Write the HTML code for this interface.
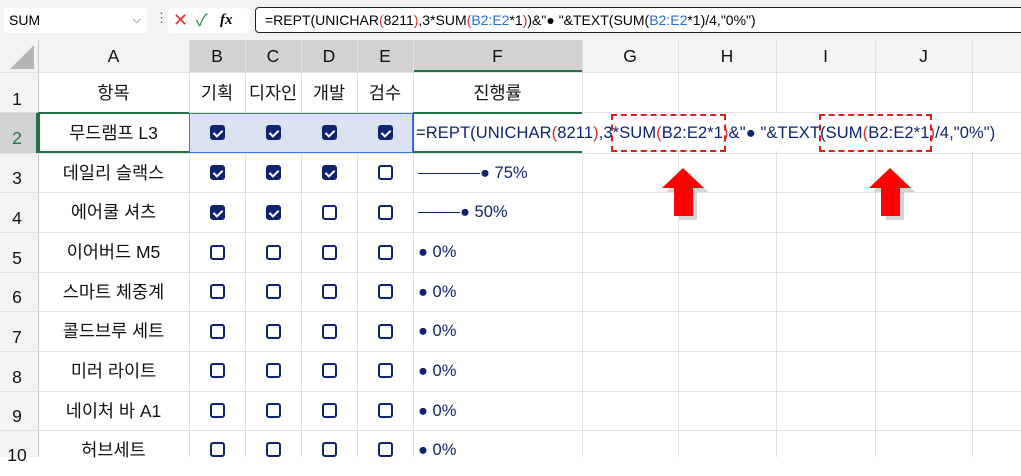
<!DOCTYPE html><html><head><meta charset="utf-8"><style>
body{margin:0;width:1021px;height:457px;overflow:hidden;background:#fff;font-family:"Liberation Sans","Noto Sans CJK KR",sans-serif;position:relative}
.a{position:absolute}
.top{left:0;top:0;width:1021px;height:40px;background:#f3f3f3}
.hdr{background:#f3f3f3;color:#222;font-size:16px;text-align:center}
.vl{position:absolute;top:40px;width:1px;height:417px;background:#e1e1e1}
.hl{position:absolute;left:0;width:1021px;height:1px;background:#e1e1e1}
.cell{position:absolute;font-size:17.5px;color:#111;text-align:center;line-height:42px}
.cb{position:absolute;width:11px;height:11px;border:2px solid #0f2370;border-radius:3px;box-sizing:content-box}
.cb.on{background:#0f2370}
.cb.on:after{content:"";position:absolute;left:3px;top:1px;width:4px;height:7px;border:solid #fff;border-width:0 2px 2px 0;transform:rotate(45deg)}
.f{position:absolute;left:418px;font-size:16.5px;color:#0f2370;line-height:40px;white-space:nowrap}
.r{color:#d9302a}.b{color:#2a6fd0}
</style></head><body>
<div class="a top"></div>
<div class="a" style="left:4px;top:8px;width:143px;height:25px;background:#fff;border-radius:4px;font-size:14px;line-height:25px;padding-left:5px;box-sizing:border-box">SUM<span style="position:absolute;right:6px;font-size:11px;color:#444">⌵</span></div>
<div class="a" style="left:155px;top:10px;font-size:13px;color:#666">⋮</div>
<div class="a" style="left:168px;top:8px;width:81px;height:25px;background:#fff;border-radius:4px"></div>
<div class="a" style="left:173px;top:8px;font-size:18px;color:#d33;line-height:25px">✕</div>
<div class="a" style="left:196px;top:8px;font-size:17px;color:#2a8a3a;line-height:25px">✓</div>
<div class="a" style="left:220px;top:8px;font-size:15px;font-style:italic;font-family:'Liberation Serif',serif;line-height:25px"><b>fx</b></div>
<div class="a" style="left:255px;top:7px;width:780px;height:26px;border:1.5px solid #222;border-radius:4px;background:#fff;font-size:14px;line-height:25px;padding-left:9px;box-sizing:border-box">=REPT(UNICHAR<span class="r">(</span>8211<span class="r">)</span>,3*SUM<span class="r">(</span><span class="b">B2:E2</span>*1<span class="r">)</span>)&amp;"● "&amp;TEXT(SUM(<span class="b">B2:E2</span>*1)/4,"0%")</div>
<!-- headers -->
<div class="a hdr" style="left:0;top:40px;width:1021px;height:32px"></div>
<div class="a hdr" style="left:0;top:72px;width:38px;height:385px"></div>
<div class="a" style="left:0;top:112px;width:38px;height:41px;background:#d2d2d2"></div>
<div class="a" style="left:189px;top:40px;width:224px;height:32px;background:#d2d2d2"></div>
<div class="a" style="left:413px;top:40px;width:169px;height:32px;background:#d2d2d2;border-bottom:2px solid #217346;box-sizing:border-box"></div>
<div class="a" style="left:36px;top:112px;width:2px;height:41px;background:#217346"></div>
<div class="a" style="left:10px;top:45px;width:0;height:0;border-left:24px solid transparent;border-bottom:24px solid #b5b5b5"></div>
<div class="vl" style="left:38px;background:#c8c8c8"></div>
<div class="vl" style="left:189px"></div><div class="vl" style="left:245px"></div><div class="vl" style="left:301px"></div><div class="vl" style="left:357px"></div><div class="vl" style="left:413px"></div><div class="vl" style="left:582px"></div><div class="vl" style="left:678px"></div><div class="vl" style="left:776px"></div><div class="vl" style="left:875px"></div><div class="vl" style="left:972px"></div>
<div class="hl" style="top:72px"></div><div class="hl" style="top:112px"></div><div class="hl" style="top:153px"></div><div class="hl" style="top:192px"></div><div class="hl" style="top:232px"></div><div class="hl" style="top:272px"></div><div class="hl" style="top:311px"></div><div class="hl" style="top:351px"></div><div class="hl" style="top:391px"></div><div class="hl" style="top:430px"></div>
<div class="cell" style="left:38px;top:40px;width:151px;line-height:32px">A</div>
<div class="cell" style="left:189px;top:40px;width:56px;line-height:32px">B</div>
<div class="cell" style="left:245px;top:40px;width:56px;line-height:32px">C</div>
<div class="cell" style="left:301px;top:40px;width:56px;line-height:32px">D</div>
<div class="cell" style="left:357px;top:40px;width:56px;line-height:32px">E</div>
<div class="cell" style="left:413px;top:40px;width:169px;line-height:32px">F</div>
<div class="cell" style="left:582px;top:40px;width:96px;line-height:32px">G</div>
<div class="cell" style="left:678px;top:40px;width:98px;line-height:32px">H</div>
<div class="cell" style="left:776px;top:40px;width:99px;line-height:32px">I</div>
<div class="cell" style="left:875px;top:40px;width:97px;line-height:32px">J</div>
<!-- row numbers -->
<div class="cell" style="left:0;top:78px;width:34px">1</div>
<div class="cell" style="left:0;top:117px;width:34px;color:#217346">2</div>
<div class="cell" style="left:0;top:157px;width:34px">3</div>
<div class="cell" style="left:0;top:197px;width:34px">4</div>
<div class="cell" style="left:0;top:237px;width:34px">5</div>
<div class="cell" style="left:0;top:276px;width:34px">6</div>
<div class="cell" style="left:0;top:316px;width:34px">7</div>
<div class="cell" style="left:0;top:356px;width:34px">8</div>
<div class="cell" style="left:0;top:395px;width:34px">9</div>
<div class="cell" style="left:0;top:434px;width:34px">10</div>
<!-- row1 -->
<div class="cell" style="left:38px;top:72px;width:151px">항목</div>
<div class="cell" style="left:189px;top:72px;width:56px">기획</div>
<div class="cell" style="left:245px;top:72px;width:56px">디자인</div>
<div class="cell" style="left:301px;top:72px;width:56px">개발</div>
<div class="cell" style="left:357px;top:72px;width:56px">검수</div>
<div class="cell" style="left:413px;top:72px;width:169px">진행률</div>
<!-- selection -->
<div class="a" style="left:189px;top:113px;width:224px;height:40px;background:#dbe3f3;border:1.5px solid #3b78d8;box-sizing:border-box"></div>
<div class="a" style="left:38px;top:112px;width:151px;height:41px;border:2px solid #217346;border-right:none;box-sizing:border-box"></div>
<div class="a" style="left:413px;top:112px;width:169px;height:41px;border-top:2px solid #217346;border-bottom:2px solid #217346;border-left:2px solid #217346;box-sizing:border-box"></div>
<div class="cell" style="left:38px;top:112px;width:151px">무드램프 L3</div>
<div class="cell" style="left:38px;top:152px;width:151px">데일리 슬랙스</div>
<div class="cell" style="left:38px;top:191px;width:151px">에어쿨 셔츠</div>
<div class="cell" style="left:38px;top:231px;width:151px">이어버드 M5</div>
<div class="cell" style="left:38px;top:271px;width:151px">스마트 체중계</div>
<div class="cell" style="left:38px;top:310px;width:151px">콜드브루 세트</div>
<div class="cell" style="left:38px;top:350px;width:151px">미러 라이트</div>
<div class="cell" style="left:38px;top:390px;width:151px">네이처 바 A1</div>
<div class="cell" style="left:38px;top:429px;width:151px">허브세트</div>
<!-- checkboxes -->
<div class="cb on" style="left:210px;top:125px"></div><div class="cb on" style="left:266px;top:125px"></div><div class="cb on" style="left:322px;top:125px"></div><div class="cb on" style="left:378px;top:125px"></div>
<div class="cb on" style="left:210px;top:165px"></div><div class="cb on" style="left:266px;top:165px"></div><div class="cb on" style="left:322px;top:165px"></div><div class="cb" style="left:378px;top:165px"></div>
<div class="cb on" style="left:210px;top:205px"></div><div class="cb on" style="left:266px;top:205px"></div><div class="cb" style="left:322px;top:205px"></div><div class="cb" style="left:378px;top:205px"></div>
<div class="cb" style="left:210px;top:245px"></div><div class="cb" style="left:266px;top:245px"></div><div class="cb" style="left:322px;top:245px"></div><div class="cb" style="left:378px;top:245px"></div>
<div class="cb" style="left:210px;top:284px"></div><div class="cb" style="left:266px;top:284px"></div><div class="cb" style="left:322px;top:284px"></div><div class="cb" style="left:378px;top:284px"></div>
<div class="cb" style="left:210px;top:324px"></div><div class="cb" style="left:266px;top:324px"></div><div class="cb" style="left:322px;top:324px"></div><div class="cb" style="left:378px;top:324px"></div>
<div class="cb" style="left:210px;top:363px"></div><div class="cb" style="left:266px;top:363px"></div><div class="cb" style="left:322px;top:363px"></div><div class="cb" style="left:378px;top:363px"></div>
<div class="cb" style="left:210px;top:403px"></div><div class="cb" style="left:266px;top:403px"></div><div class="cb" style="left:322px;top:403px"></div><div class="cb" style="left:378px;top:403px"></div>
<div class="cb" style="left:210px;top:442px"></div><div class="cb" style="left:266px;top:442px"></div><div class="cb" style="left:322px;top:442px"></div><div class="cb" style="left:378px;top:442px"></div>
<!-- F column -->
<div class="a" style="left:414px;top:114px;width:606px;height:37px;background:#fff"></div>
<div class="f" style="left:416px;top:113px;letter-spacing:0.1px">=REPT(UNICHAR<span class="r">(</span>8211<span class="r">)</span>,3*SUM<span class="r">(</span>B2:E2*1<span class="r">)</span>&amp;"● "&amp;TEXT(SUM<span class="r">(</span>B2:E2*1<span class="r">)</span>/4,"0%")</div>
<div class="a" style="left:611px;top:114px;width:115px;height:38px;border:2.5px dashed #e21b1b;box-sizing:border-box"></div>
<div class="a" style="left:819px;top:114px;width:113px;height:38px;border:2.5px dashed #e21b1b;box-sizing:border-box"></div>
<div class="f" style="top:153px"><span style="display:inline-block;width:62px;height:1px;background:#0f2370;vertical-align:middle"></span>● 75%</div>
<div class="f" style="top:192px"><span style="display:inline-block;width:42px;height:1px;background:#0f2370;vertical-align:middle"></span>● 50%</div>
<div class="f" style="top:232px">● 0%</div><div class="f" style="top:272px">● 0%</div><div class="f" style="top:311px">● 0%</div><div class="f" style="top:351px">● 0%</div><div class="f" style="top:391px">● 0%</div><div class="f" style="top:430px">● 0%</div>
<!-- arrows -->
<svg class="a" style="left:660px;top:166px" width="50" height="56"><polygon points="25,4 46,24 35,24 35,52 17,52 17,24 4,24" fill="#aaa" opacity="0.5" transform="translate(2,2)"/><polygon points="23,2 44,22 33,22 33,50 14,50 14,22 2,22" fill="#f00"/></svg>
<svg class="a" style="left:867px;top:166px" width="50" height="56"><polygon points="25,4 46,24 35,24 35,52 17,52 17,24 4,24" fill="#aaa" opacity="0.5" transform="translate(2,2)"/><polygon points="23,2 44,22 33,22 33,50 14,50 14,22 2,22" fill="#f00"/></svg>
</body></html>
